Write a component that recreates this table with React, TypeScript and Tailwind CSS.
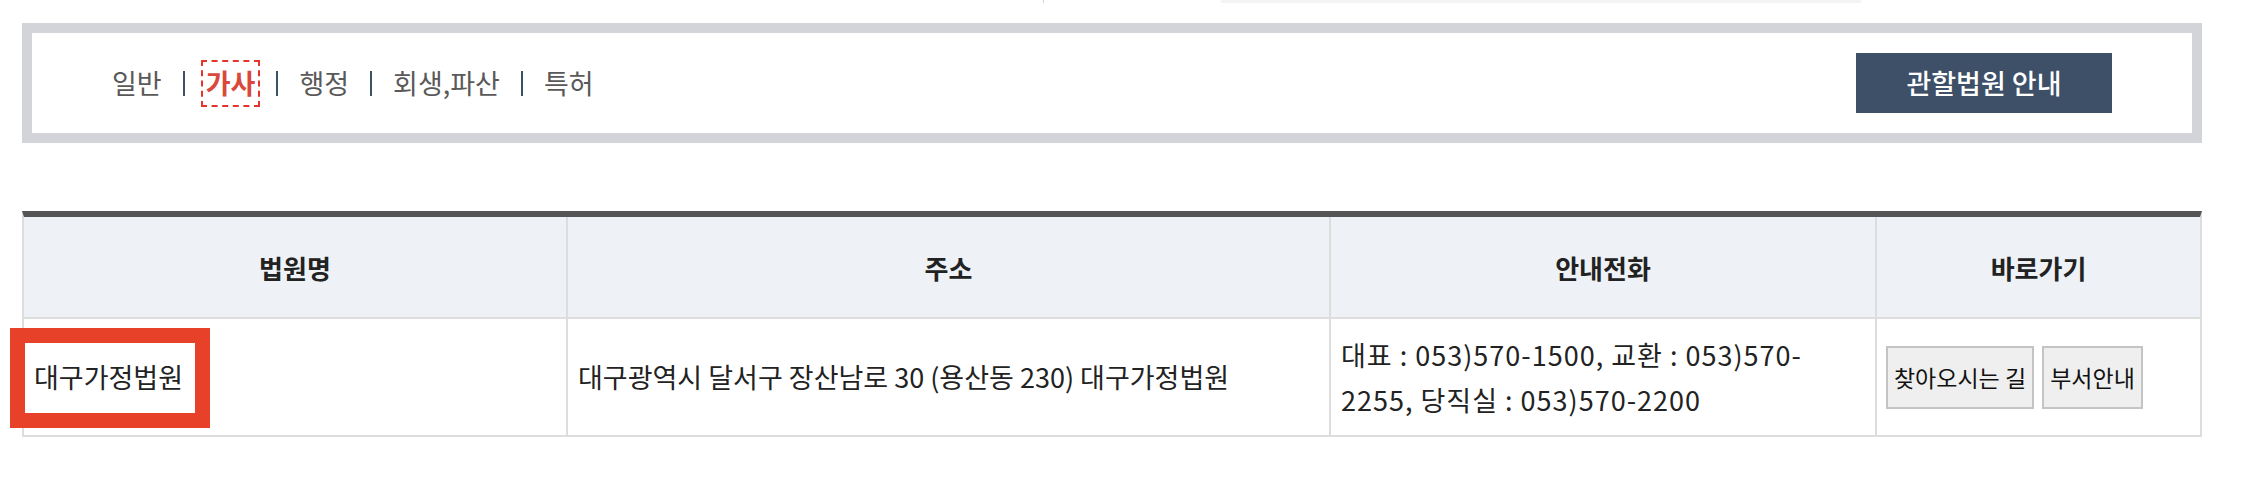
const tabs = ['일반', '가사', '행정', '회생,파산', '특허'];
const activeTab = '가사';

function CourtTabs() {
  return (
    <nav className="flex items-center gap-[16px]">
      {tabs.map((tab, i) => (
        <div key={tab} className="flex items-center gap-[16px]">
          {i > 0 && <span className="block w-[2px] h-[25px] bg-[#3d5068]" />}
          <a
            href="#"
            className={
              tab === activeTab
                ? 'flex items-center h-[47px] px-[5px] text-[27px] font-bold text-[#d9483b] outline-2 outline-dashed outline-[#e5352a] -outline-offset-2'
                : 'flex items-center h-[47px] px-[5px] text-[27px] text-[#595959]'
            }
          >
            {tab}
          </a>
        </div>
      ))}
    </nav>
  );
}

function CourtTable() {
  const cell = 'flex items-center px-[10px] text-[27px] text-[#222]';
  const head = 'flex items-center justify-center text-[26px] font-bold text-[#222]';
  return (
    <div className="ml-[22px] w-[2180px] border-t-[6px] border-t-[#555] border-x-2 border-x-[#ddd]">
      <div className="grid grid-cols-[544px_763px_546px_323px] h-[102px] bg-[#eef2f6] border-b-2 border-[#ddd]">
        <div className={`${head} border-r-2 border-[#ddd]`}>법원명</div>
        <div className={`${head} border-r-2 border-[#ddd]`}>주소</div>
        <div className={`${head} border-r-2 border-[#ddd]`}>안내전화</div>
        <div className={head}>바로가기</div>
      </div>
      <div className="grid grid-cols-[544px_763px_546px_323px] h-[118px] border-b-2 border-[#ddd]">
        <div className={`${cell} border-r-2 border-[#ddd]`}>대구가정법원</div>
        <div className={`${cell} border-r-2 border-[#ddd]`}>
          대구광역시 달서구 장산남로 30 (용산동 230) 대구가정법원
        </div>
        <div className={`${cell} border-r-2 border-[#ddd] leading-[45px] tracking-[1px]`}>
          <p>
            대표 : 053)570-1500, 교환 : 053)570-
            <br />
            2255, 당직실 : 053)570-2200
          </p>
        </div>
        <div className="flex items-center gap-[8px] pl-[9px]">
          <button className="w-[148px] h-[63px] bg-[#efefef] border-2 border-[#c4c4c4] text-[23px] text-[#111] whitespace-nowrap">
            찾아오시는 길
          </button>
          <button className="w-[101px] h-[63px] bg-[#efefef] border-2 border-[#c4c4c4] text-[23px] text-[#111] whitespace-nowrap">
            부서안내
          </button>
        </div>
      </div>
    </div>
  );
}

export default function App() {
  return (
    <div className="relative w-[2254px] h-[482px] bg-white font-['Noto_Sans_CJK_KR',sans-serif]">
      <div className="flex h-[3px]">
        <div className="ml-[1043px] w-px bg-[#cfcfcf]" />
        <div className="ml-[177px] w-[640px] bg-[#f4f4f4]" />
      </div>

      <div className="mt-[20px] ml-[22px] w-[2180px] h-[120px] border-[10px] border-[#d2d4d9] flex items-center justify-between pl-[75px] pr-[80px]">
        <CourtTabs />
        <button className="w-[256px] h-[60px] bg-[#3d5068] text-white text-[27px] font-medium">
          관할법원 안내
        </button>
      </div>

      <div className="mt-[68px]">
        <CourtTable />
      </div>

      <div className="absolute left-[10px] top-[328px] w-[200px] h-[100px] border-[15px] border-[#e8412a]" />
    </div>
  );
}
